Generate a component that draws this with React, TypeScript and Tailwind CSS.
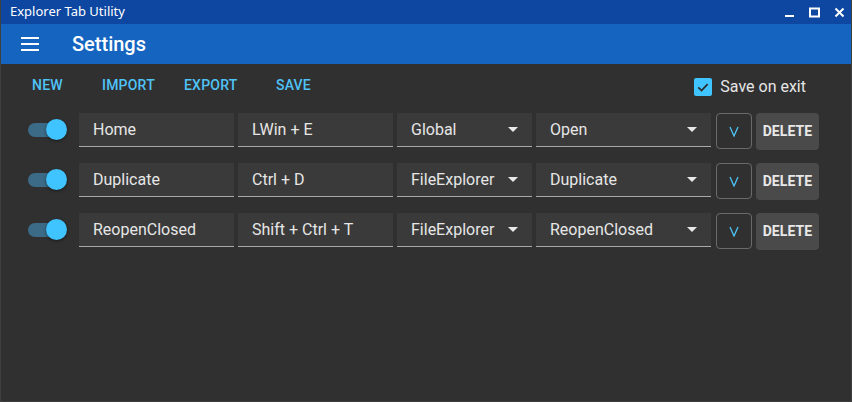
import React from "react";

const rows = [
  { name: "Home", key: "LWin + E", scope: "Global", action: "Open" },
  { name: "Duplicate", key: "Ctrl + D", scope: "FileExplorer", action: "Duplicate" },
  { name: "ReopenClosed", key: "Shift + Ctrl + T", scope: "FileExplorer", action: "ReopenClosed" },
];

function Arrow() {
  return (
    <svg width="10" height="5" viewBox="0 0 10 5" className="shrink-0">
      <path d="M0 0 L10 0 L5 5 Z" fill="#e8e8e8" />
    </svg>
  );
}

function Field({ w, text, select }: { w: string; text: string; select?: boolean }) {
  return (
    <div className={`${w} h-[34px] bg-[#3a3a3a] border-b border-[#a8a8a8] flex items-center pl-[14px] pr-[14px] justify-between shrink-0`}>
      <span className="text-[16px] text-[#e6e6e6] whitespace-nowrap">{text}</span>
      {select && <Arrow />}
    </div>
  );
}

export default function App() {
  return (
    <div
      className="w-[852px] h-[402px] flex flex-col bg-[#303030] border-x border-b border-[#3f3f3f] overflow-hidden"
      style={{ fontFamily: "Roboto, 'Liberation Sans', sans-serif" }}
    >
      {/* Title bar */}
      <div className="h-[24px] bg-[#0d47a1] flex items-center justify-between pl-[9px] pr-[6px] shrink-0">
        <span className="text-[13px] text-white" style={{ fontFamily: "'Noto Sans', 'Liberation Sans', sans-serif" }}>
          Explorer Tab Utility
        </span>
        <div className="flex items-center gap-[14px]">
          <svg width="11" height="11" viewBox="0 0 11 11"><rect x="1" y="8" width="9" height="2" fill="#fff" /></svg>
          <svg width="11" height="11" viewBox="0 0 11 11"><rect x="1" y="1.5" width="9" height="8" fill="none" stroke="#fff" strokeWidth="2" /></svg>
          <svg width="11" height="11" viewBox="0 0 11 11"><path d="M1.5 1.5 L9.5 9.5 M9.5 1.5 L1.5 9.5" stroke="#fff" strokeWidth="2" /></svg>
        </div>
      </div>
      {/* App bar */}
      <div className="h-[40px] bg-[#1565c0] flex items-center shrink-0">
        <div className="w-[71px] flex pl-[20px]">
          <svg width="18" height="14" viewBox="0 0 18 14">
            <rect x="0" y="0" width="18" height="2" fill="#fff" />
            <rect x="0" y="6" width="18" height="2" fill="#fff" />
            <rect x="0" y="12" width="18" height="2" fill="#fff" />
          </svg>
        </div>
        <span className="text-[20px] font-medium text-white">Settings</span>
      </div>
      {/* Toolbar */}
      <div className="h-[43px] flex items-center pl-[31px] pr-[45px] shrink-0">
        <div className="flex items-center text-[14px] font-medium text-[#4fc3f7] tracking-[0.2px]">
          <span className="w-[70px]">NEW</span>
          <span className="w-[82px]">IMPORT</span>
          <span className="w-[92px]">EXPORT</span>
          <span>SAVE</span>
        </div>
        <div className="ml-auto flex items-center gap-[8px] pt-[2px]">
          <div className="w-[18px] h-[18px] rounded-[2px] bg-[#40c4ff] flex items-center justify-center">
            <svg width="14" height="14" viewBox="0 0 24 24">
              <path d="M4 12.5 L9.5 18 L20 7" fill="none" stroke="#2b2b2b" strokeWidth="3" />
            </svg>
          </div>
          <span className="text-[16px] text-[#e6e6e6]">Save on exit</span>
        </div>
      </div>
      {/* Rows */}
      <div className="flex flex-col gap-[16px] pl-[26px] pt-[6px]">
        {rows.map((r) => (
          <div key={r.name} className="flex items-start h-[34px]">
            <div className="w-[52px] h-[34px] relative shrink-0">
              <div className="absolute left-[1px] top-[10px] w-[34px] h-[14px] rounded-full bg-[#3b6b87]" />
              <div className="absolute left-[19px] top-[6px] w-[21px] h-[21px] rounded-full bg-[#40c4ff] shadow-[0_1px_3px_rgba(0,0,0,0.5)]" />
            </div>
            <div className="flex gap-[4px]">
              <Field w="w-[155px]" text={r.name} />
              <Field w="w-[155px]" text={r.key} />
              <Field w="w-[135px]" text={r.scope} select />
              <Field w="w-[175px]" text={r.action} select />
            </div>
            <div className="ml-[5px] w-[36px] h-[36px] rounded-[4px] border border-[#6a6a6a] flex items-center justify-center shrink-0">
              <svg width="10" height="11" viewBox="0 0 10 11">
                <path d="M1 1 L5 10 L9 1" fill="none" stroke="#4fc3f7" strokeWidth="1.3" />
              </svg>
            </div>
            <div className="ml-[4px] w-[63px] h-[37px] rounded-[4px] bg-[#4a4a4a] flex items-center justify-center text-[14px] font-bold text-[#e8e8e8] tracking-[0.1px] shrink-0">
              DELETE
            </div>
          </div>
        ))}
      </div>
    </div>
  );
}
